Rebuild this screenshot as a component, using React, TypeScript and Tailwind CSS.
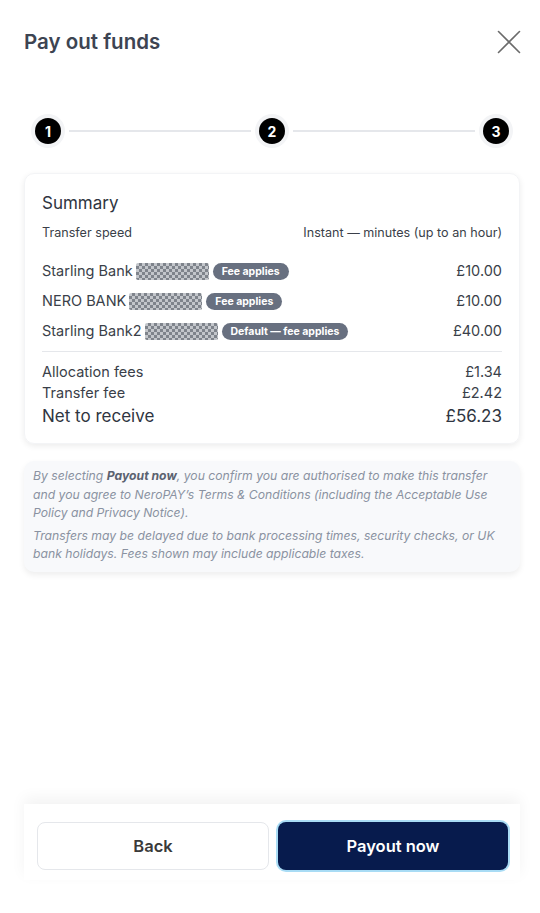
const accounts = [
  { name: 'Starling Bank', tag: 'Fee applies', amount: '£10.00' },
  { name: 'NERO BANK', tag: 'Fee applies', amount: '£10.00' },
  { name: 'Starling Bank2', tag: 'Default — fee applies', amount: '£40.00' },
];

function Masked() {
  return (
    <span className="inline-block h-[17px] w-[73px] rounded-[2px] bg-[repeating-conic-gradient(#7f848c_0_25%,#c3c6cb_0_50%)] bg-[length:6px_6px] blur-[0.7px]" />
  );
}

function Step({ n }: { n: number }) {
  return (
    <div className="flex h-[26px] w-[26px] shrink-0 items-center justify-center rounded-full bg-black text-[14px] font-bold text-white ring-4 ring-gray-100">
      {n}
    </div>
  );
}

export default function App() {
  return (
    <div className="flex h-[913px] flex-col bg-white font-['Inter',sans-serif] text-gray-700">
      <div className="flex items-center justify-between pl-6 pr-[19px] pt-[28px]">
        <h1 className="text-[20.5px] font-semibold leading-7 text-[#3d4452]">Pay out funds</h1>
        <svg width="24" height="24" viewBox="0 0 24 24" fill="none" stroke="#6b6b6b" strokeWidth="1.6" strokeLinecap="round">
          <path d="M1.5 1.5L22.5 22.5M22.5 1.5L1.5 22.5" />
        </svg>
      </div>

      <div className="mt-[62px] flex items-center pl-[35px] pr-[31px]">
        <Step n={1} />
        <div className="mx-[8px] h-[2px] flex-1 bg-gray-200" />
        <Step n={2} />
        <div className="mx-[8px] h-[2px] flex-1 bg-gray-200" />
        <Step n={3} />
      </div>

      <div className="ml-6 mr-5 mt-[29px] rounded-[10px] border border-gray-100 px-[17px] pb-[15px] pt-[17px] shadow-[0_2px_6px_rgba(0,0,0,0.08)]">
        <div className="text-[17px] leading-6 text-[#2f3541]">Summary</div>
        <div className="mt-[10px] flex justify-between text-[12.6px] leading-4 text-[#3a3f49]">
          <span>Transfer speed</span>
          <span>Instant — minutes (up to an hour)</span>
        </div>
        <div className="mt-[20px] flex flex-col gap-[10px]">
          {accounts.map((a) => (
            <div key={a.name} className="flex h-[20px] items-center justify-between text-[14.5px] text-[#3a3f49]">
              <div className="flex items-center">
                <span>{a.name}</span>
                <span className="ml-[3px] flex items-center"><Masked /></span>
                <span className="ml-[4px] rounded-full bg-[#687080] px-[9px] text-[10.5px] font-bold leading-[17px] text-white">
                  {a.tag}
                </span>
              </div>
              <span>{a.amount}</span>
            </div>
          ))}
        </div>
        <div className="mt-[10px] h-px bg-gray-200" />
        <div className="mt-[10px] flex justify-between text-[14.5px] leading-5 text-[#3a3f49]">
          <span>Allocation fees</span>
          <span>£1.34</span>
        </div>
        <div className="mt-[1px] flex justify-between text-[14.5px] leading-5 text-[#3a3f49]">
          <span>Transfer fee</span>
          <span>£2.42</span>
        </div>
        <div className="mt-[1px] flex justify-between text-[17px] leading-6 text-[#2f3541]">
          <span>Net to receive</span>
          <span>£56.23</span>
        </div>
      </div>

      <div className="ml-6 mr-5 mt-[17px] rounded-[10px] bg-[#f8f9fb] pb-[8px] pl-[9px] pr-[17px] pt-[6px] text-[12.2px] italic leading-[18.5px] text-[#8a92a1] shadow-[0_3px_6px_rgba(0,0,0,0.07)]">
        <p>
          By selecting <b className="font-bold text-[#5b6270]">Payout now</b>, you confirm you are authorised to make this transfer and you agree to NeroPAY’s Terms &amp; Conditions (including the Acceptable Use Policy and Privacy Notice).
        </p>
        <p className="mt-[4px]">
          Transfers may be delayed due to bank processing times, security checks, or UK bank holidays. Fees shown may include applicable taxes.
        </p>
      </div>

      <div className="flex-1" />

      <div className="mb-[33px] ml-6 mr-5 flex gap-[9px] bg-white pb-[10px] pl-[13px] pr-[12px] pt-[18px] shadow-[0_-6px_14px_rgba(0,0,0,0.05)]">
        <button className="h-[48px] flex-1 rounded-lg border border-gray-200 bg-white text-[16.5px] font-semibold text-[#3a3a3a]">
          Back
        </button>
        <button className="h-[48px] flex-1 rounded-lg bg-[#071b4d] text-[16.5px] font-semibold text-white ring-2 ring-[#a9dcf5]">
          Payout now
        </button>
      </div>
    </div>
  );
}
